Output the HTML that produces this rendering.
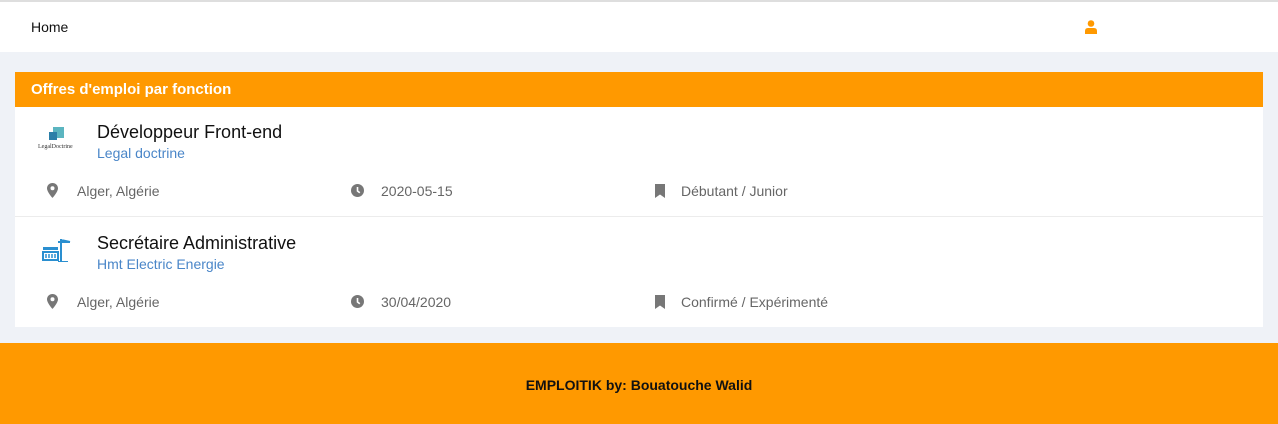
<!DOCTYPE html>
<html><head><meta charset="utf-8"><style>
*{margin:0;padding:0;box-sizing:border-box}
body{width:1278px;height:424px;background:#eff2f7;font-family:"Liberation Sans",Arial,sans-serif;position:relative;overflow:hidden}
.top{position:absolute;left:0;top:0;width:1278px;height:52px;background:#fff;border-top:2px solid #dedede}
.home{position:absolute;left:31px;top:17px;font-size:14px;color:#111}
.user{position:absolute;left:1085px;top:18px}
.card{position:absolute;left:15px;top:72px;width:1248px;height:255px;background:#fff}
.hd{height:35px;background:#ff9900;color:#fff;font-weight:bold;font-size:15px;padding:9px 16px}
.row{position:absolute;left:0;width:1248px;height:110px}
.title{position:absolute;left:82px;top:15px;font-size:18px;color:#111}
.comp{position:absolute;left:82px;top:38px;font-size:14px;color:#4a86c8}
.meta{position:absolute;top:76px;font-size:14px;color:#666}
.ic{position:absolute;top:76px}
.foot{position:absolute;left:0;top:343px;width:1278px;height:81px;background:#ff9900;text-align:center;font-weight:bold;font-size:14px;color:#111;padding-top:34px}
</style></head><body>
<div class="top"><span class="home">Home</span>
<svg class="user" width="12" height="14" viewBox="0 0 12 14"><circle cx="6" cy="3.5" r="3.3" fill="#ff9900"/><path d="M0 14 V11 Q0 8 3 8 H9 Q12 8 12 11 V14Z" fill="#ff9900"/></svg></div>
<div class="card">
<div class="hd">Offres d'emploi par fonction</div>
<div class="row" style="top:35px;border-bottom:1px solid #ececec">
<svg style="position:absolute;left:22px;top:19px" width="40" height="26" viewBox="0 0 40 26"><rect x="16" y="1" width="11" height="11" fill="#5bb5c0"/><rect x="12" y="6" width="8" height="8" fill="#2b7fa8"/><text x="1" y="22" font-size="6" font-family="Liberation Serif,serif" fill="#333">LegalDoctrine</text></svg>
<div class="title">Développeur Front-end</div>
<div class="comp">Legal doctrine</div>
<svg class="ic" style="left:32px;top:76px" width="11" height="15" viewBox="0 0 11 15"><path d="M5.5 0 C2.5 0 0 2.3 0 5.3 C0 9 5.5 15 5.5 15 C5.5 15 11 9 11 5.3 C11 2.3 8.5 0 5.5 0Z M5.5 3.3 A2 2 0 1 1 5.5 7.3 A2 2 0 1 1 5.5 3.3Z" fill="#777" fill-rule="evenodd"/></svg>
<div class="meta" style="left:62px">Alger, Algérie</div>
<svg class="ic" style="left:336px;top:77px" width="13" height="13" viewBox="0 0 13 13"><circle cx="6.5" cy="6.5" r="6.5" fill="#777"/><path d="M6.5 3 V7 L8.8 8.8" stroke="#fff" stroke-width="1.6" fill="none"/></svg>
<div class="meta" style="left:366px">2020-05-15</div>
<svg class="ic" style="left:640px;top:77px" width="10" height="14" viewBox="0 0 10 14"><path d="M0 0 H10 V14 L5 10.5 L0 14Z" fill="#777"/></svg>
<div class="meta" style="left:666px">Débutant / Junior</div>
</div>
<div class="row" style="top:146px">
<svg style="position:absolute;left:26px;top:20px" width="30" height="24" viewBox="0 0 30 24"><path d="M20 1 V24 M17 24 H27 M20 4 H29 M17 4 H20 M20 2 L29 4" stroke="#2a8fd0" stroke-width="2" fill="none"/><rect x="2" y="9" width="15" height="3" fill="#2a8fd0"/><rect x="2" y="14" width="15" height="8" fill="none" stroke="#2a8fd0" stroke-width="2"/><path d="M5 16 V20 M8 16 V20 M11 16 V20 M14 16 V20" stroke="#2a8fd0" stroke-width="1.5"/></svg>
<div class="title">Secrétaire Administrative</div>
<div class="comp">Hmt Electric Energie</div>
<svg class="ic" style="left:32px;top:76px" width="11" height="15" viewBox="0 0 11 15"><path d="M5.5 0 C2.5 0 0 2.3 0 5.3 C0 9 5.5 15 5.5 15 C5.5 15 11 9 11 5.3 C11 2.3 8.5 0 5.5 0Z M5.5 3.3 A2 2 0 1 1 5.5 7.3 A2 2 0 1 1 5.5 3.3Z" fill="#777" fill-rule="evenodd"/></svg>
<div class="meta" style="left:62px">Alger, Algérie</div>
<svg class="ic" style="left:336px;top:77px" width="13" height="13" viewBox="0 0 13 13"><circle cx="6.5" cy="6.5" r="6.5" fill="#777"/><path d="M6.5 3 V7 L8.8 8.8" stroke="#fff" stroke-width="1.6" fill="none"/></svg>
<div class="meta" style="left:366px">30/04/2020</div>
<svg class="ic" style="left:640px;top:77px" width="10" height="14" viewBox="0 0 10 14"><path d="M0 0 H10 V14 L5 10.5 L0 14Z" fill="#777"/></svg>
<div class="meta" style="left:666px">Confirmé / Expérimenté</div>
</div>
</div>
<div class="foot">EMPLOITIK by: Bouatouche Walid</div>
</body></html>
